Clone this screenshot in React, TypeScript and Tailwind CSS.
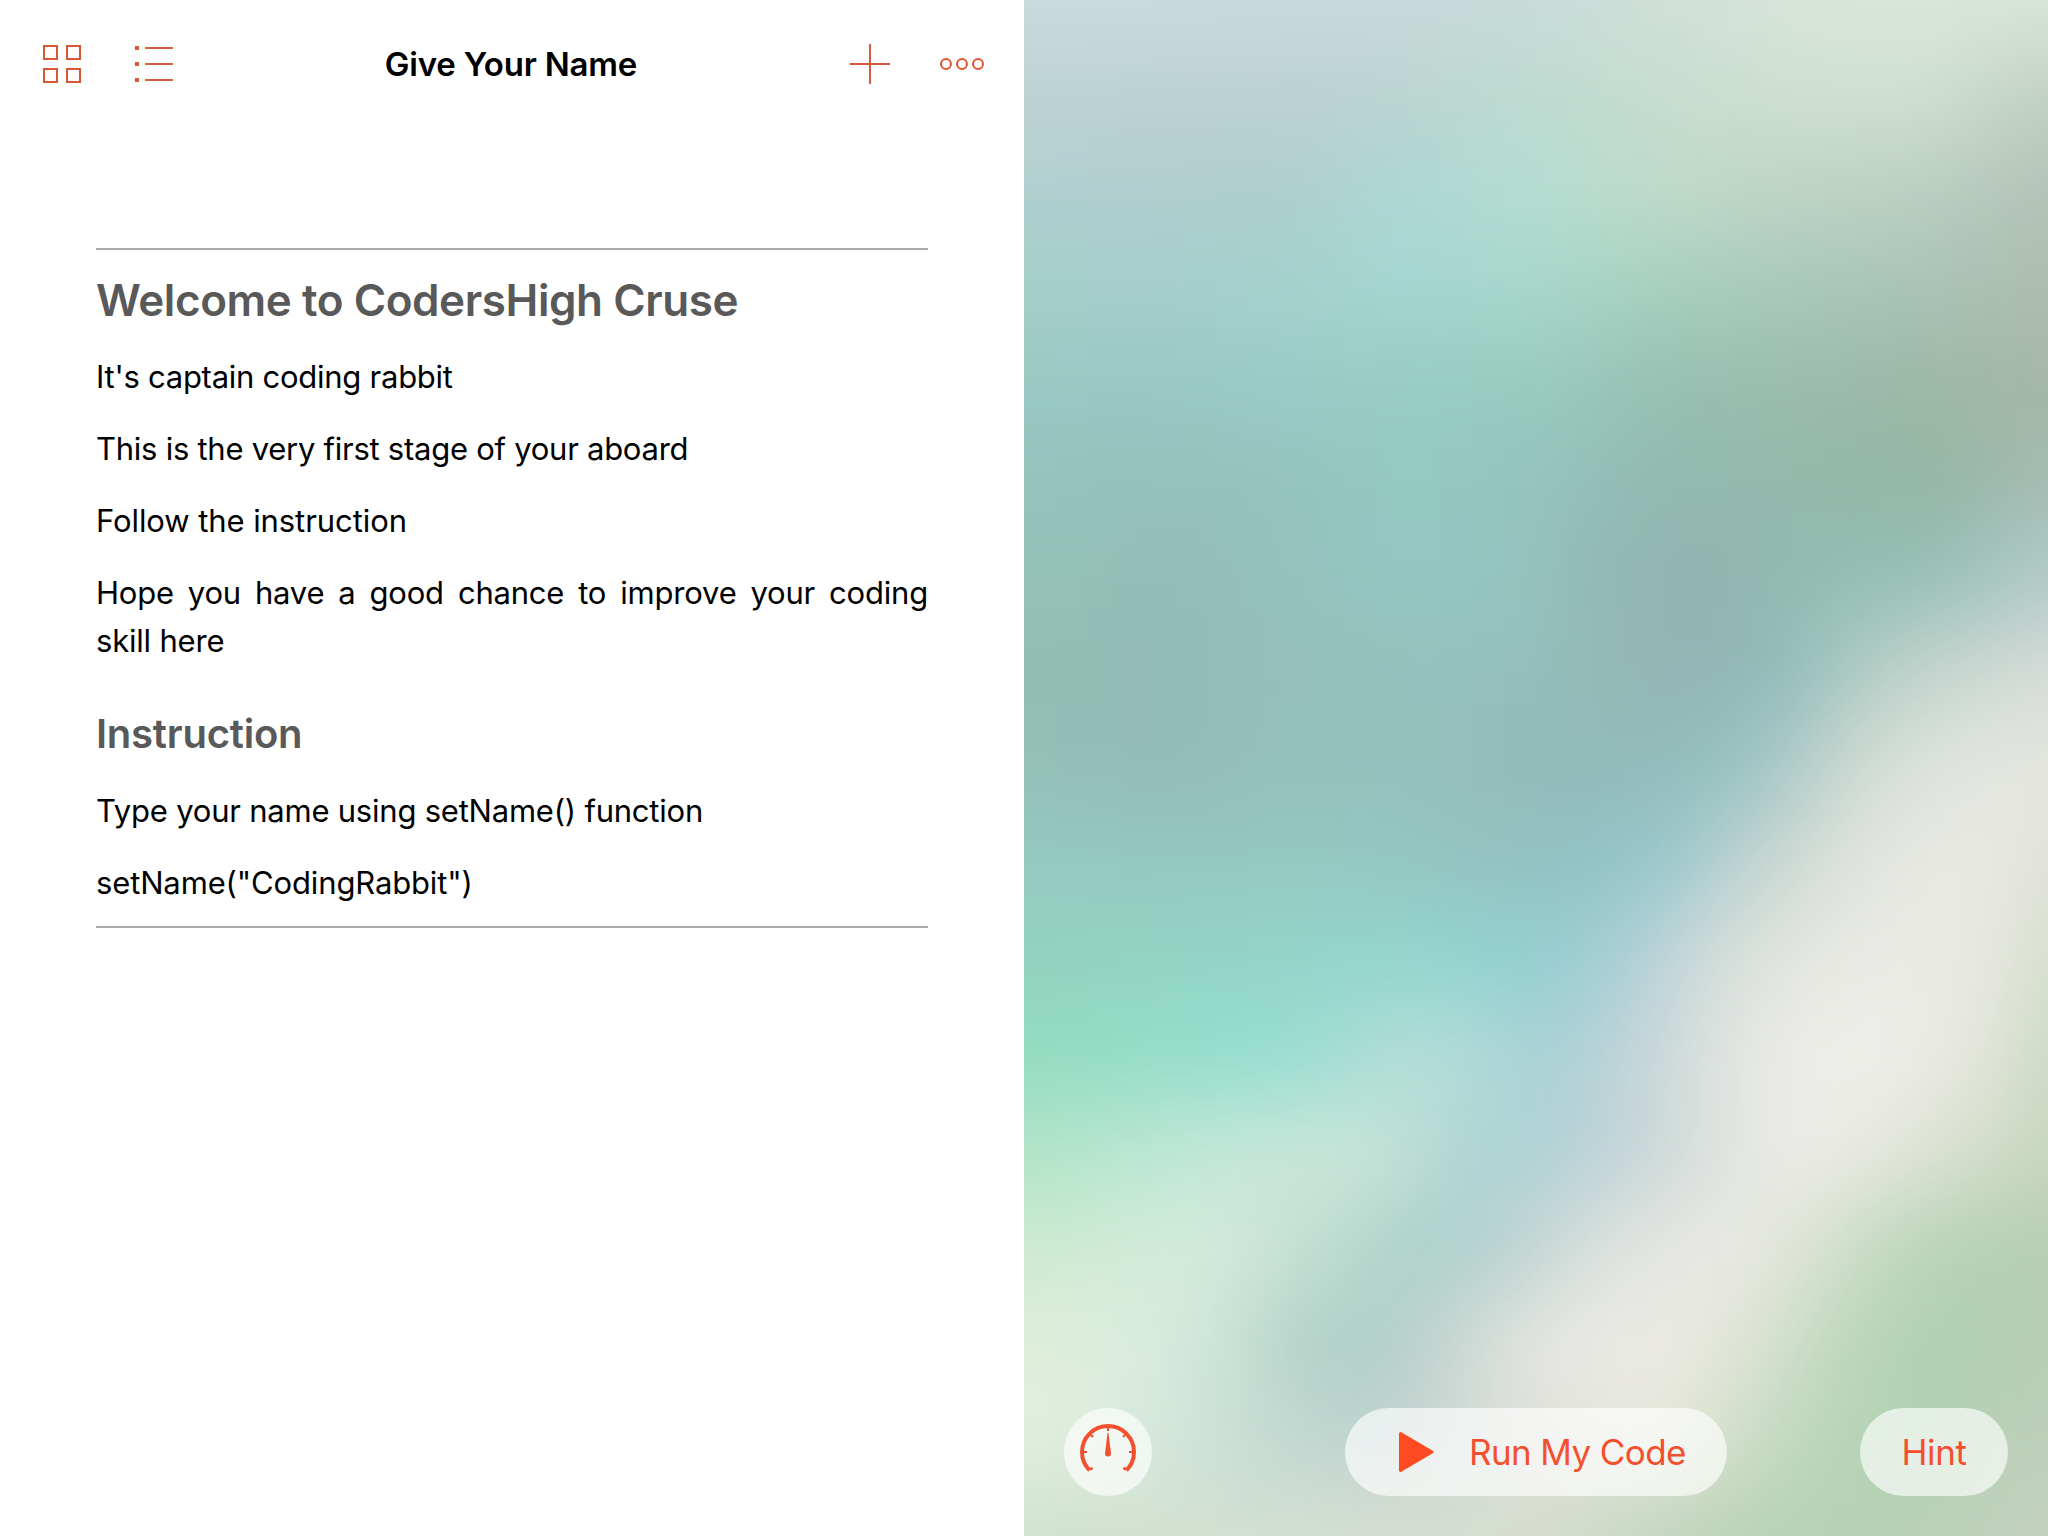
import React from "react";

/*
 * Colour samples of the backdrop, one row every 96px. The calm upper rows are
 * sampled every 128px, the busier lower ones every 64px.
 */
const MESH = [
  "cadcdc cadbdc cadadb c9dadb c8dcda d0e0d8 d8e4da dbe5dc d8e5d8",
  "bdd3d1 bcd2d1 bbd1d0 bbd4d0 bddbd0 c6ddd0 cee0d3 cfe0d4 c2d0c4",
  "b0cfcf b0cecd afcecb aed8d3 b6ddd2 bfdaca bdd3c5 bacfc2 b2c2b8",
  "a7cfc8 a6cecb a4d2cb a4d7d0 a7d7ca a8cfbe a8c9bb a8c3b6 adbdb1",
  "98c9c2 99c8c3 9acbc5 98cdc1 98ccbe 98bfb2 9bbcad 9cb8a8 a5b7a7",
  "94c4bc 94c1ba 94c4bc 94cac0 94c4bc 93b9b0 94b8ab 93b6a4 a4bbb2",
  "94c1b5 94c0b5 94bdb5 94beb8 94c2bb 94c5be 94c8c0 94c6bf 94c3bc 93b8b0 93b4b1 93b4ae 93bab0 94beb4 97bfb6 a2c4c0 b2cbca",
  "94beb2 94bdb5 94bbb5 94bdb7 94c0b9 94c0b9 94c1bb 94c0bb 94bebb 94bab4 94b5b4 93b6b4 95bdba aeccc4 c2d4cd ced9d3 d8dcd8",
  "94c0b6 94beb5 94bcb5 94beb7 94c1b9 94c1ba 94bfba 94bdb9 93bbb9 93bbba 93bbbb 96c2bf b0ccc9 cfdad2 dde2dc e4e6e0 e5e6e0",
  "94cbc0 94cac0 94c9be 94c9bf 94c9bf 94c9c1 94c7c2 94c4c1 93c2c2 92c4c8 9ac8cd b9d1d1 d0dad3 e1e4de e7e8e2 eaeae4 e0e1d8",
  "93d2bd 93d3c0 93d4c2 93d4c5 93d5c8 93d6cb 93d7cd 92d3d0 93cfd2 a3cdd5 c0d4d8 d8dfda e4e6df e9eae4 ebebe6 e7e8e1 d6dfce",
  "93dcc2 93ddc4 94dec8 95decc 97dfcf a6ddd2 b4dfd6 b2dad7 a9d2d6 b8d2d7 ccd8d9 e1e5e0 ecece7 efefeb ecece7 e3e5db cbdac4",
  "b1e4c8 b6e5ce bde6d4 c4e7d8 c8e6da cbe6da c1dfd6 b0d4d2 afd2d5 bdd2d6 cfd9d8 e0e4df ecece8 e9e9e3 dfe3d6 d4ddc9 c9d6be",
  "cdeace cfead5 d2ebdb d2eadc c9e2d6 badacf add1c9 b1d1ce c5d6d3 dce1dd e5e6e1 eaeae5 e0e4d9 cbddc5 bad5b8 b4d1b3 b5ceb3",
  "deeed9 deeedd d8ecdf cde4d8 b9d5cb adcfc7 b7d0cc d2dbd6 e5e6e1 ebeae5 ebebe5 e3e5da cedec7 bad6ba b1d1b1 b1d0b1 b8ceb5",
  "e2eedf dfecdf d6e8dc cbe1d7 c3dad2 bfd4d0 c6d4d1 d3dbd6 dedfd8 e4e5dd e6e7db d3dfc9 bfd8bf b5d3b5 b2d1b3 b7d0b6 bdcfb9",
  "cfe2cf d2e0d0 d4dfd3 d7ded2 d6ddcf c2d5bd b4d2b5 b8d1b7 c5d2bd",
].map((row) => row.split(" ").map((hex) => [0, 2, 4].map((i) => parseInt(hex.slice(i, i + 2), 16))));

const clamp = (n: number, max: number) => Math.max(0, Math.min(max, n));

const mix = (a: number[], b: number[], t: number) => a.map((n, i) => n + (b[i] - n) * t);

/* Colour along one row, u running from 0 (left) to 1 (right). */
function alongRow(row: number[][], u: number) {
  const last = row.length - 1;
  const c = clamp(u, 1) * last;
  const c0 = Math.min(last - 1, Math.floor(c));
  return mix(row[c0], row[c0 + 1], c - c0);
}

function sample(x: number, y: number) {
  const r = clamp(y / 96, 16);
  const r0 = Math.min(15, Math.floor(r));
  const rgb = mix(alongRow(MESH[r0], x / 1024), alongRow(MESH[r0 + 1], x / 1024), r - r0);
  return `rgb(${rgb.map(Math.round).join(",")})`;
}

function Backdrop() {
  const cells: React.ReactElement[] = [];
  for (let y = -96; y < 1632; y += 32) {
    for (let x = -96; x < 1120; x += 32) {
      cells.push(<rect key={`${x}:${y}`} x={x} y={y} width={33} height={33} fill={sample(x + 16, y + 16)} />);
    }
  }
  return (
    <svg className="absolute inset-0 h-full w-full" viewBox="0 0 1024 1536" aria-hidden="true">
      <defs>
        <filter id="soft" x="-96" y="-96" width="1216" height="1728" filterUnits="userSpaceOnUse" colorInterpolationFilters="sRGB">
          <feGaussianBlur stdDeviation="24" />
        </filter>
      </defs>
      <g filter="url(#soft)">{cells}</g>
    </svg>
  );
}

function GridIcon() {
  return (
    <svg width="40" height="40" viewBox="0 0 40 40" fill="none" stroke="#dc5636" strokeWidth="2">
      <rect x="2" y="2" width="13" height="13" />
      <rect x="25" y="2" width="13" height="13" />
      <rect x="2" y="25" width="13" height="13" />
      <rect x="25" y="25" width="13" height="13" />
    </svg>
  );
}

function ListIcon() {
  return (
    <svg width="40" height="40" viewBox="0 0 40 40">
      {[4, 20, 36].map((y) => (
        <g key={y}>
          <rect x="1" y={y - 2} width="4" height="4" fill="#e0553a" />
          <rect x="11" y={y - 1} width="28" height="2" fill="#d25c42" />
        </g>
      ))}
    </svg>
  );
}

function PlusIcon() {
  return (
    <svg width="40" height="40" viewBox="0 0 40 40" fill="#d65a3e">
      <rect x="0" y="19" width="40" height="2" />
      <rect x="19" y="0" width="2" height="40" />
    </svg>
  );
}

function MoreIcon() {
  return (
    <svg width="44" height="12" viewBox="0 0 44 12" fill="none" stroke="#e25735" strokeWidth="2">
      <circle cx="6" cy="6" r="5" />
      <circle cx="22" cy="6" r="5" />
      <circle cx="38" cy="6" r="5" />
    </svg>
  );
}

function GaugeIcon() {
  return (
    <svg width="88" height="88" viewBox="-44 -44 88 88" fill="none" stroke="#f5502e">
      <path d="M-18.4 18.4A26 26 0 1 1 18.4 18.4" strokeWidth="4" />
      <path d="M0-25V-21M-25 0H-21M25 0H21M-17.5-17.5L-15-15M17.5-17.5L15-15" strokeWidth="2" />
      <path d="M-17.8 17.8L-15.6 15.6M17.8 17.8L15.6 15.6" strokeWidth="2.4" />
      <path d="M-.5-19H.5L3 1.6A3 3 0 1 1-3 1.6Z" fill="#f5502e" stroke="none" />
    </svg>
  );
}

function PlayIcon() {
  return (
    <svg width="36" height="42" viewBox="0 0 36 42" fill="#ff4a22" stroke="#ff4a22" strokeWidth="3" strokeLinejoin="round">
      <path d="M2.5 2.5L34 21L2.5 39.5Z" />
    </svg>
  );
}

export default function App() {
  return (
    <div className="flex h-[1536px] w-[2048px] overflow-hidden bg-white font-['Inter',sans-serif]">
      <section className="flex w-[1024px] flex-col">
        <header className="flex h-32 items-center pr-[40px] pl-[42px]">
          <div className="flex w-[298px] gap-[52px]">
            <GridIcon />
            <ListIcon />
          </div>
          <h1 className="flex-1 pt-px pr-px text-center text-[33px] font-semibold tracking-[-0.2px] whitespace-nowrap text-black">
            Give Your Name
          </h1>
          <div className="flex w-[301px] items-center justify-end gap-[50px]">
            <PlusIcon />
            <MoreIcon />
          </div>
        </header>
        <article className="mx-24 mt-[120px] h-[680px] border-y-2 border-[#aaaaaa] pt-5 text-justify text-[31px] leading-[48px] text-black">
          <h2 className="text-[44px] leading-[60px] font-semibold tracking-[-0.42px] text-[#595959]">
            Welcome to CodersHigh Cruse
          </h2>
          <p className="mt-[23px] tracking-[-0.26px]">It's captain coding rabbit</p>
          <p className="mt-6 tracking-[-0.26px]">This is the very first stage of your aboard</p>
          <p className="mt-6 tracking-[-0.08px]">Follow the instruction</p>
          <p className="mt-6 tracking-[-0.2px]">Hope you have a good chance to improve your coding skill here</p>
          <h3 className="mt-[41px] text-[40px] leading-[56px] font-semibold tracking-[-0.22px] text-[#595959]">
            Instruction
          </h3>
          <p className="mt-[25px] tracking-[-0.22px]">Type your name using setName() function</p>
          <p className="mt-6 tracking-[-0.14px]">setName("CodingRabbit")</p>
        </article>
      </section>
      <section className="relative flex w-[1024px] flex-col justify-end overflow-hidden">
        <Backdrop />
        <div className="relative mb-10 flex items-center px-10 text-[35px] text-[#f5502e]">
          <button className="h-[88px] w-[88px] rounded-full bg-white/65">
            <GaugeIcon />
          </button>
          <button className="ml-[193px] flex h-[88px] w-[382px] items-center rounded-full bg-white/65 pl-[53px]">
            <PlayIcon />
            <span className="ml-[35px] tracking-[-0.6px] whitespace-nowrap">Run My Code</span>
          </button>
          <button className="ml-[133px] h-[88px] w-[148px] rounded-full bg-white/65 tracking-[-0.4px]">Hint</button>
        </div>
      </section>
    </div>
  );
}
